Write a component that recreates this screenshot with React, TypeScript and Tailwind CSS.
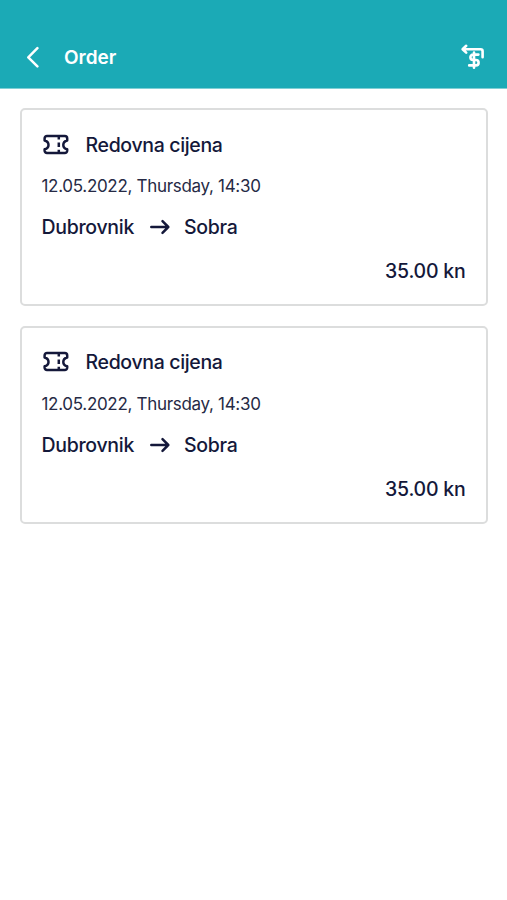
import React from "react";

interface Ticket {
  id: number;
  fare: string;
  departure: string;
  from: string;
  to: string;
  price: string;
}

const tickets: Ticket[] = [
  { id: 1, fare: "Redovna cijena", departure: "12.05.2022, Thursday, 14:30", from: "Dubrovnik", to: "Sobra", price: "35.00 kn" },
  { id: 2, fare: "Redovna cijena", departure: "12.05.2022, Thursday, 14:30", from: "Dubrovnik", to: "Sobra", price: "35.00 kn" },
];

function BackIcon() {
  return (
    <svg width="14" height="22" viewBox="0 0 14 22" fill="none" stroke="currentColor" strokeWidth="2.5" strokeLinecap="round" strokeLinejoin="round">
      <path d="M11.4 2.2 2.3 11.3l9.1 9" />
    </svg>
  );
}

function RefundIcon() {
  return (
    <svg width="26" height="28" viewBox="0 0 26 28" fill="none" stroke="currentColor" strokeWidth="2.6" strokeLinecap="round" strokeLinejoin="round">
      <path d="M6.2 2.8 2.6 6.2l3.6 3.4M3 6.2h17.6a2 2 0 0 1 2 2v6" />
      <path d="M18.4 11.6h-5.3a2.7 2.7 0 0 0 0 5.4h2.8a2.7 2.7 0 0 1 0 5.4H9.2M14 9.6v15.2" />
    </svg>
  );
}

function TicketIcon() {
  return (
    <svg width="28" height="22" viewBox="0 0 28 22" fill="none" stroke="currentColor" strokeWidth="2.5" strokeLinejoin="round">
      <path d="M5 2h17.800a2.400 2.400 0 0 1 2.400 2.400v2.100c-2.200.6-3.900 2.300-3.900 4.400s1.700 3.800 3.900 4.400v1.300a2.400 2.400 0 0 1-2.400 2.400H5a2.400 2.400 0 0 1-2.400-2.400v-1.300c2.200-.6 3.900-2.300 3.900-4.400s-1.700-3.800-3.900-4.400V4.400A2.400 2.400 0 0 1 5 2Z" />
      <path d="M16.800 2v3.600M16.800 8.600v4.400M16.800 15.800V19" />
    </svg>
  );
}

function ArrowIcon() {
  return (
    <svg width="22" height="18" viewBox="0 0 22 18" fill="none" stroke="currentColor" strokeWidth="2.5" strokeLinecap="round" strokeLinejoin="round">
      <path d="M2.3 9h17M13.5 3.200 19.300 9l-5.800 5.800" />
    </svg>
  );
}

function TicketCard({ ticket }: { ticket: Ticket }) {
  return (
    <div className="h-[198px] rounded-[5px] border-2 border-[#dcdddd] pt-[22.5px] pr-[20.5px] pl-[19.5px]">
      <div className="flex h-6 items-center">
        <TicketIcon />
        <span className="ml-4 pt-[2px] text-[19.5px] font-[550] tracking-[-0.34px]">{ticket.fare}</span>
      </div>
      <div className="mt-[17.5px] h-6 text-[17px] leading-6 tracking-[-0.31px] text-[#262a45]">{ticket.departure}</div>
      <div className="mt-[17px] flex h-6 items-center text-[19.5px] font-[550] tracking-[-0.3px]">
        <span className="pt-[2px]">{ticket.from}</span>
        <span className="mr-[13px] ml-[15px]">
          <ArrowIcon />
        </span>
        <span className="pt-[2px]">{ticket.to}</span>
      </div>
      <div className="mt-5 h-6 text-right text-[19.5px] leading-6 font-[550] tracking-[-0.22px]">{ticket.price}</div>
    </div>
  );
}

export default function App() {
  return (
    <div className="min-h-[900px] bg-white font-['Inter',sans-serif] text-[#14183a]">
      <header className="flex h-[89px] items-end justify-between border-b border-[#7fcfd5] bg-[#1baab6] pr-[21px] pb-[17px] pl-[26px] text-white">
        <div className="flex h-7 items-center">
          <BackIcon />
          <h1 className="ml-6 pt-[2px] text-[19px] font-semibold">Order</h1>
        </div>
        <RefundIcon />
      </header>
      <main className="flex flex-col gap-[19.5px] pt-[19px] pr-[19px] pl-5">
        {tickets.map((ticket) => (
          <TicketCard key={ticket.id} ticket={ticket} />
        ))}
      </main>
    </div>
  );
}
